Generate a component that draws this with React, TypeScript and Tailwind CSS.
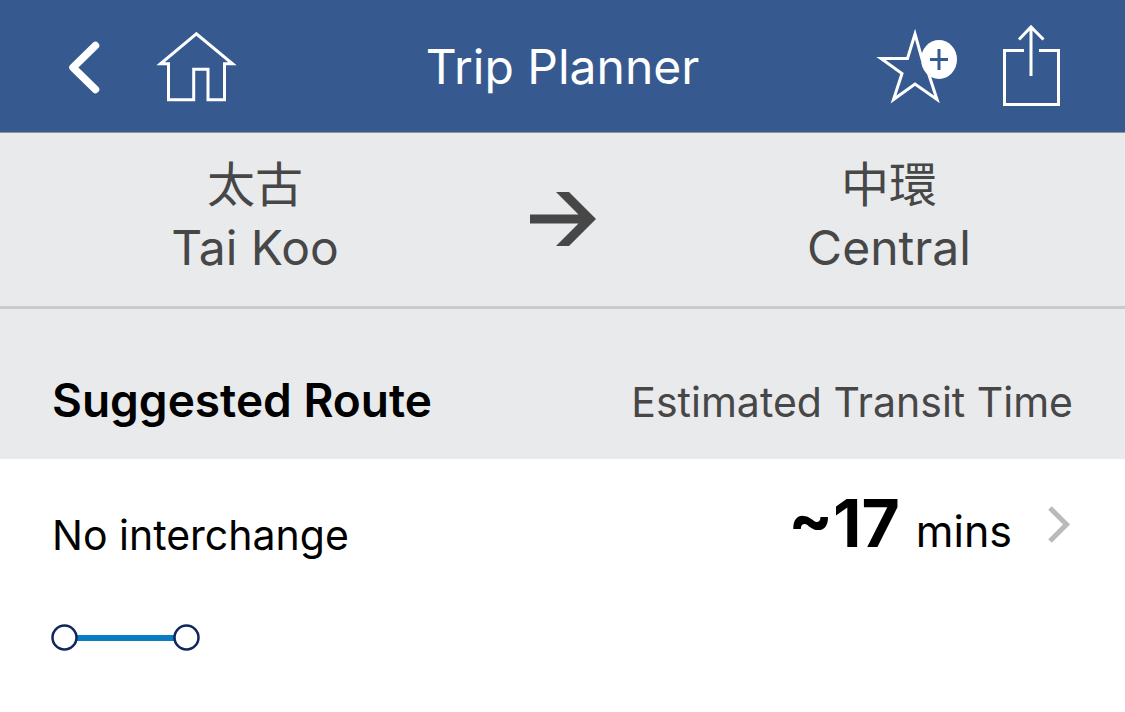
import { ReactNode } from "react";

const stations = {
  from: { zh: "太古", en: "Tai Koo" },
  to: { zh: "中環", en: "Central" },
};

const routes = [{ title: "No interchange", time: "~17", unit: "mins" }];

const App = () => {
  return (
    <div className="min-h-screen bg-white font-['Inter','Noto_Sans_CJK_TC',sans-serif] text-black">
      <Header />
      <main>
        <section className="grid h-44 grid-cols-[510fr_143fr_472fr] border-b-3 border-[#c9cacc] bg-[#e9eaec] pt-[23px] text-[#474747]">
          <Station data={stations.from} />
          <div className="pt-9 pl-5">
            <ArrowIcon />
          </div>
          <Station data={stations.to} />
        </section>
        <div className="flex h-[150px] items-baseline justify-between bg-[#e9eaec] px-[52px] pt-[61px]">
          <h2 className="text-[46px] leading-[60px] font-semibold">
            Suggested Route
          </h2>
          <p className="text-[41px] leading-[60px] text-[#474747]">
            Estimated Transit Time
          </p>
        </div>
        {routes.map((item, key) => (
          <a key={key} href="#route" className="block px-[52px] pt-6">
            <div className="flex items-center">
              <h3 className="flex-1 pt-4 text-[41px] leading-[60px]">
                {item.title}
              </h3>
              <p className="flex items-baseline gap-x-4 text-[43px] leading-[80px]">
                <span className="text-[66px] font-bold">{item.time}</span>
                <span>{item.unit}</span>
              </p>
              <ChevronIcon />
            </div>
            <RouteLine />
          </a>
        ))}
      </main>
    </div>
  );
};

export default App;

const Header = () => {
  return (
    <header className="grid h-[133px] grid-cols-[1fr_auto_1fr] items-center border-b border-[#8f959f] bg-[#365a8f] px-16 pt-0.5 text-white">
      <div className="flex gap-x-12">
        <IconButton label="Back">
          <svg width="40" height="80" viewBox="64 27 40 80" fill="none">
            <path
              d="M95.500 45.500 73 67.500 95.500 89.500"
              stroke="currentColor"
              strokeWidth="7.500"
              strokeLinecap="round"
              strokeLinejoin="round"
            />
          </svg>
        </IconButton>
        <IconButton label="Home">
          <svg width="88" height="80" viewBox="152 27 88 80" fill="none">
            <path
              d="M196.300 33.800 160.500 63.800H168.500V99.700H193.700V69.300H208V99.700H224.500V63.800H232.500Z"
              stroke="currentColor"
              strokeWidth="3"
            />
          </svg>
        </IconButton>
      </div>
      <h1 className="text-[48px]">Trip Planner</h1>
      <div className="flex justify-end gap-x-8">
        <IconButton label="Add bookmark">
          <svg width="90" height="88" viewBox="873 23 90 88" fill="none">
            <path
              d="M915 34 922 59H947L928.500 73.500 937 99.500 915 84 893.500 99.500 902 73.500 881 58.500H907.500Z"
              stroke="currentColor"
              strokeWidth="3"
            />
            <ellipse cx="939" cy="59.500" rx="18" ry="19.500" fill="currentColor" />
            <path d="M930 59.500H948M939 49V70" stroke="#365a8f" strokeWidth="3" />
          </svg>
        </IconButton>
        <IconButton label="Share">
          <svg width="66" height="88" viewBox="995 23 66 88" fill="none">
            <path
              d="M1024 50.500H1004.500V104.500H1058.500V50.500H1039M1031 76V27M1019 39.500 1031 27 1043.500 39.500"
              stroke="currentColor"
              strokeWidth="3"
            />
          </svg>
        </IconButton>
      </div>
    </header>
  );
};

const IconButton = ({
  label,
  children,
}: {
  label: string;
  children: ReactNode;
}) => {
  return (
    <button type="button" aria-label={label} className="cursor-pointer">
      {children}
    </button>
  );
};

const Station = ({ data }: { data: { zh: string; en: string } }) => {
  return (
    <div className="text-center">
      <p lang="zh-HK" className="text-[48px] leading-[58px]">
        {data.zh}
      </p>
      <p className="text-[48px] leading-[68px]">{data.en}</p>
    </div>
  );
};

const ArrowIcon = () => {
  return (
    <svg width="66" height="54" viewBox="0 0 66 54" fill="currentColor">
      <path d="M26 0H39L66 27 39 54H26L48.500 31.500H0V22.500H48.500Z" />
    </svg>
  );
};

const ChevronIcon = () => {
  return (
    <svg
      className="ml-9 text-[#bbb9ba]"
      width="25"
      height="44"
      viewBox="1048 505 25 44"
      fill="none"
    >
      <path d="M1050 508 1066.500 524.500 1050 541" stroke="currentColor" strokeWidth="5" />
    </svg>
  );
};

const RouteLine = () => {
  return (
    <svg
      className="mt-13 overflow-visible"
      width="150"
      height="28"
      viewBox="53 623 150 28"
      fill="none"
    >
      <path d="M76 638H175" stroke="#0a7cc4" strokeWidth="6" />
      <circle cx="65.500" cy="637.500" r="12" fill="white" stroke="#10265c" strokeWidth="2.500" />
      <circle cx="187.500" cy="637.500" r="12" fill="white" stroke="#10265c" strokeWidth="2.500" />
    </svg>
  );
};
